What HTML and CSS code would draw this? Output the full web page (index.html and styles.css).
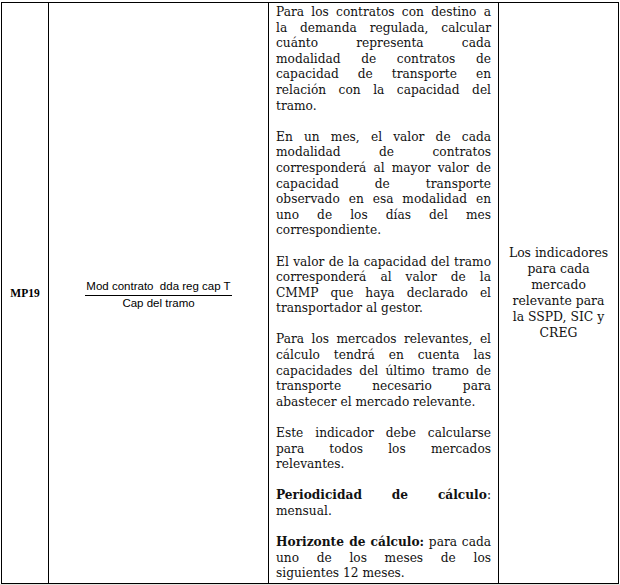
FILE: index.html
```html
<!DOCTYPE html>
<html lang="es">
<head>
<meta charset="utf-8">
<link rel="stylesheet" href="styles.css">
</head>
<body>
<div class="page">
<table class="ind">
<colgroup>
<col class="c1"><col class="c2"><col class="c3"><col class="c4">
</colgroup>
<tr>
<td class="code">MP19</td>
<td class="formula">
<div class="frac">
<div class="num">Mod contrato&nbsp; dda reg cap T</div>
<div class="den">Cap del tramo</div>
</div>
</td>
<td class="desc">
<p>
<span class="j">Para los contratos con destino a</span>
<span class="j">la demanda regulada, calcular</span>
<span class="j">cuánto representa cada</span>
<span class="j">modalidad de contratos de</span>
<span class="j">capacidad de transporte en</span>
<span class="j">relación con la capacidad del</span>
<span class="l">tramo.</span>
</p>
<p>
<span class="j">En un mes, el valor de cada</span>
<span class="j">modalidad de contratos</span>
<span class="j">corresponderá al mayor valor de</span>
<span class="j">capacidad de transporte</span>
<span class="j">observado en esa modalidad en</span>
<span class="j">uno de los días del mes</span>
<span class="l">correspondiente.</span>
</p>
<p>
<span class="j">El valor de la capacidad del tramo</span>
<span class="j">corresponderá al valor de la</span>
<span class="j">CMMP que haya declarado el</span>
<span class="l">transportador al gestor.</span>
</p>
<p>
<span class="j">Para los mercados relevantes, el</span>
<span class="j">cálculo tendrá en cuenta las</span>
<span class="j">capacidades del último tramo de</span>
<span class="j">transporte necesario para</span>
<span class="l">abastecer el mercado relevante.</span>
</p>
<p>
<span class="j">Este indicador debe calcularse</span>
<span class="j">para todos los mercados</span>
<span class="l">relevantes.</span>
</p>
<p>
<span class="j"><b>Periodicidad de cálculo</b>:</span>
<span class="l">mensual.</span>
</p>
<p>
<span class="j"><b>Horizonte de cálculo:</b> para cada</span>
<span class="j">uno de los meses de los</span>
<span class="l">siguientes 12 meses.</span>
</p>
</td>
<td class="who">Los indicadores para cada mercado relevante para la SSPD, SIC y CREG</td>
</tr>
</table>
</div>
</body>
</html>
```
FILE: styles.css
```css
html, body {
  margin: 0;
  padding: 0;
}
body {
  background: #e3e1dc;
  width: 620px;
  height: 585px;
  overflow: hidden;
}
.page {
  background: #ffffff;
  height: 584px;
  padding: 2px 0 0 1px;
  box-sizing: border-box;
}
.ind {
  border-collapse: collapse;
  table-layout: fixed;
  width: 617px;
}
.c1 { width: 47px; }
.c2 { width: 220px; }
.c3 { width: 230px; }
.c4 { width: 120px; }
.ind td {
  border: 1.5px solid #000;
  vertical-align: middle;
  padding: 0;
}
.code {
  font-family: "Liberation Serif", serif;
  font-weight: bold;
  font-size: 11.5px;
  text-align: center;
  color: #000;
}
.formula {
  text-align: center;
}
.frac {
  display: inline-flex;
  flex-direction: column;
  align-items: stretch;
  font-family: "Liberation Sans", sans-serif;
  font-size: 11.5px;
  color: #000;
}
.num {
  padding: 0 1px 2px;
  border-bottom: 1px solid #000;
  line-height: 13px;
}
.den {
  padding-top: 1px;
  line-height: 13px;
}
.desc {
  font-family: "DejaVu Serif", serif;
  font-size: 12.2px;
  line-height: 15.6px;
  color: #111;
  padding: 2px 7px 1px 7px !important;
}
.desc p {
  margin: 0 0 15.6px 0;
}
.desc p:last-child {
  margin-bottom: 0;
}
.desc span {
  display: block;
}
.desc .j {
  text-align: justify;
  text-align-last: justify;
}
.desc .l {
  text-align: left;
}
.who {
  font-family: "DejaVu Serif", serif;
  font-size: 12.4px;
  line-height: 16px;
  text-align: center;
  color: #111;
  padding: 0 6px !important;
}
```
